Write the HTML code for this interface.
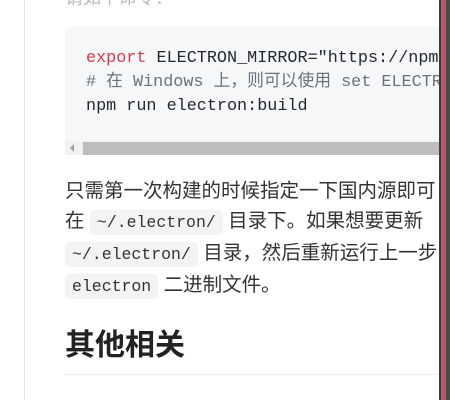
<!DOCTYPE html>
<html><head><meta charset="utf-8"><style>
*{margin:0;padding:0;box-sizing:border-box}
body{width:450px;height:400px;overflow:hidden;background:#fff;position:relative;font-family:"Liberation Sans","Noto Sans CJK SC",sans-serif;color:#333}
.lb{position:absolute;left:24px;top:0;width:1px;height:400px;background:#e6e6e6}
.code{position:absolute;left:65px;top:27px;width:380px;height:128px;background:#f6f7f9;border-radius:6px 0 0 0;overflow:hidden}
.code pre{position:absolute;left:21px;top:20px;font-family:"Liberation Mono","Noto Sans CJK SC",monospace;font-size:16.8px;line-height:24px;color:#24292e;white-space:pre}
.k{color:#d73a49}.c{color:#6a737d}
.sb{position:absolute;left:0;top:114px;width:380px;height:14px;background:#f1f1f1}
.th{position:absolute;left:18px;top:1px;width:362px;height:13px;background:#bdbdbd}
.ar{position:absolute;left:5px;top:3px;width:0;height:0;border-top:4px solid transparent;border-bottom:4px solid transparent;border-right:4px solid #a0a0a0}
.p{position:absolute;left:65px;top:176px;width:380px;font-size:19.5px;line-height:30px;color:#333;white-space:nowrap}
code{font-family:"Liberation Mono",monospace;font-size:16.5px;background:#f3f3f3;border-radius:5px;padding:3px 7px;color:#333}
h2{position:absolute;left:65px;top:326px;font-size:30px;font-weight:bold;color:#222;font-family:"Liberation Sans","Noto Sans CJK SC",sans-serif;line-height:40px}
.hr{position:absolute;left:65px;top:374px;width:380px;height:1px;background:#eaecef}
.r1{position:absolute;left:439px;top:0;width:2px;height:400px;background:#3c3c3c}
.r2{position:absolute;left:441px;top:0;width:5px;height:400px;background:#b65c68}
.r3{position:absolute;left:446px;top:0;width:4px;height:400px;background:#4b4b4b}
</style></head><body>
<div class="lb"></div>
<div style="position:absolute;left:65px;top:-16px;font-size:18px;color:#bbb">请如下命令：</div>
<div class="code"><pre><span class="k">export</span> ELECTRON_MIRROR="https://npm
<span class="c"># 在 Windows 上，则可以使用 set ELECTRON</span>
npm run electron:build</pre>
<div class="sb"><div class="ar"></div><div class="th"></div></div></div>
<div class="p">只需第一次构建的时候指定一下国内源即可<br>在 <code>~/.electron/</code> 目录下。如果想要更新<br><code>~/.electron/</code> 目录，然后重新运行上一步<br><code>electron</code> 二进制文件。</div>
<h2>其他相关</h2>
<div class="hr"></div>
<div class="r1"></div><div class="r2"></div><div class="r3"></div>
</body></html>
